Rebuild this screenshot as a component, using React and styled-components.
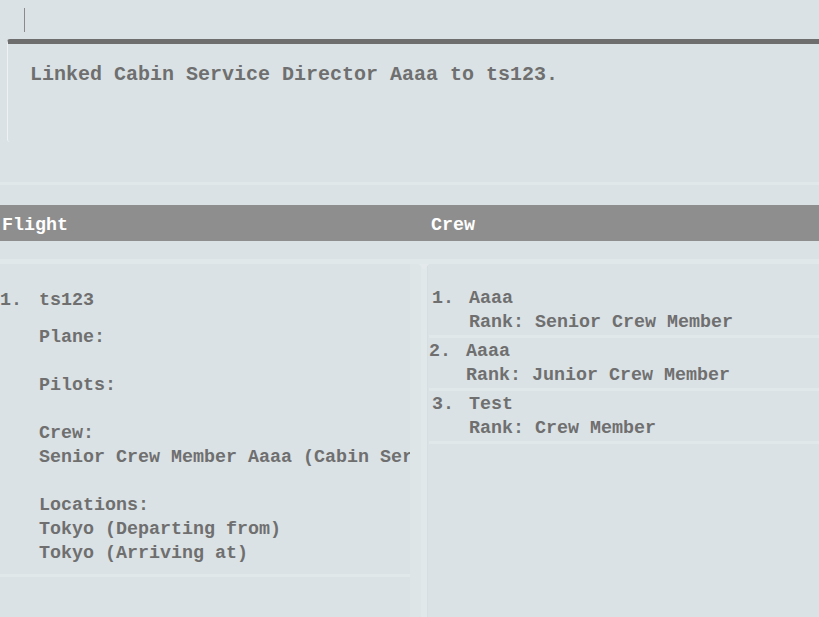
import styled, { createGlobalStyle } from "styled-components";

const BG = "#dae2e5";
const LIGHT = "#e1e8ea";
const TEXT = "#6f6f6f";

const GlobalStyle = createGlobalStyle`
  html, body {
    margin: 0;
    padding: 0;
    background: ${BG};
  }
  body {
    font-family: "Liberation Mono", "Courier New", monospace;
    font-weight: bold;
    color: ${TEXT};
    overflow: hidden;
  }
`;

const crew = [
  { name: "Aaaa", rank: "Senior Crew Member", inset: 3 },
  { name: "Aaaa", rank: "Junior Crew Member", inset: 0 },
  { name: "Test", rank: "Crew Member", inset: 3 },
];

const flightLines = [
  { label: "Plane:", values: [] },
  { label: "Pilots:", values: [] },
  { label: "Crew:", values: ["Senior Crew Member Aaaa (Cabin Service Director)"] },
  {
    label: "Locations:",
    values: ["Tokyo (Departing from)", "Tokyo (Arriving at)"],
  },
];

function App() {
  return (
    <Page>
      <GlobalStyle />
      <CommandBox>
        <Caret />
      </CommandBox>
      <ResultBox>Linked Cabin Service Director Aaaa to ts123.</ResultBox>
      <Divider />

      <HeaderBar>
        <HeaderCell>Flight</HeaderCell>
        <HeaderCell>Crew</HeaderCell>
      </HeaderBar>

      <Band />
      <Panels>
        <LeftPanel>
          <FlightCell>
            <Index $width={39}>1.</Index>
            <div>
              <Line>ts123</Line>
              <Details>
                {flightLines.map((group, i) => (
                  <Group key={group.label} $last={i === flightLines.length - 1}>
                    <Line>{group.label}</Line>
                    {group.values.map((v) => (
                      <Line key={v}>{v}</Line>
                    ))}
                  </Group>
                ))}
              </Details>
            </div>
          </FlightCell>
          <FlightCell $empty />
        </LeftPanel>
        <Track />
        <Splitter>
          <SplitterTip />
        </Splitter>
        <RightPanel>
          {crew.map((c, i) => (
            <CrewCell key={i} $inset={c.inset}>
              <Index $width={37}>{i + 1}.</Index>
              <div>
                <Line>{c.name}</Line>
                <Line>Rank: {c.rank}</Line>
              </div>
            </CrewCell>
          ))}
        </RightPanel>
      </Panels>
    </Page>
  );
}

export default App;

const Page = styled.div`
  width: 819px;
  height: 617px;
  display: flex;
  flex-direction: column;
  overflow: hidden;

  & > * {
    flex-shrink: 0;
  }
`;

const CommandBox = styled.div`
  height: 39px;
  padding: 8px 0 0 24px;
  box-sizing: border-box;
`;

const Caret = styled.div`
  width: 1px;
  height: 24px;
  background: #8a8a8a;
`;

const ResultBox = styled.div`
  margin-left: 7px;
  height: 103px;
  box-sizing: border-box;
  border-top: 5px solid #6e6e6e;
  border-left: 1px solid #eef2f3;
  border-top-left-radius: 3px;
  border-bottom-left-radius: 3px;
  padding: 19px 0 0 22px;
  font-size: 20px;
  line-height: 24px;
  white-space: nowrap;
`;

const Divider = styled.div`
  margin-top: 40px;
  height: 3px;
  background: ${LIGHT};
`;

const HeaderBar = styled.div`
  margin-top: 20px;
  height: 36px;
  box-sizing: border-box;
  padding-top: 4px;
  background: #8e8e8e;
  display: grid;
  grid-template-columns: 429px 1fr;
  align-items: center;
  font-size: 18.33px;
  color: #ffffff;
`;

const HeaderCell = styled.div`
  padding-left: 2px;
`;

const Band = styled.div`
  margin-top: 18px;
  height: 5px;
  background: ${LIGHT};
`;

const Panels = styled.div`
  flex: 1 1 auto !important;
  min-height: 0;
  overflow: hidden;
  display: grid;
  grid-template-columns: 410px 11px 6px 1fr;
  font-size: 18.33px;
  line-height: 24px;
  white-space: nowrap;
`;

const LeftPanel = styled.div`
  padding-top: 22px;
  display: flex;
  flex-direction: column;
  gap: 4px;
  overflow: hidden;
`;

const Track = styled.div`
  background: #dde5e7;
`;

const Splitter = styled.div`
  position: relative;
  background: ${LIGHT};
`;

const SplitterTip = styled.div`
  position: absolute;
  top: 0;
  left: -2px;
  width: 0;
  height: 0;
  border-left: 5px solid transparent;
  border-right: 5px solid transparent;
  border-top: 6px solid #e4eaec;
`;

const RightPanel = styled.div`
  padding: 21px 0 0 1px;
  border-left: 1px solid #d6dee1;
  display: flex;
  flex-direction: column;
`;

const FlightCell = styled.div`
  display: flex;
  flex-shrink: 0;
  background: ${BG};
  border-bottom: 3px solid ${LIGHT};
  padding: 3px 0 8px 0;
  min-height: ${({ $empty }) => ($empty ? "60px" : "auto")};
`;

const CrewCell = styled.div`
  display: flex;
  padding: 2px 0 0 ${({ $inset }) => $inset}px;
  border-bottom: 3px solid ${LIGHT};
`;

const Index = styled.div`
  width: ${({ $width }) => $width}px;
  flex-shrink: 0;
`;

const Details = styled.div`
  margin-top: 13px;
  display: flex;
  flex-direction: column;
`;

const Group = styled.div`
  margin-bottom: ${({ $last }) => ($last ? "0" : "24px")};
`;

const Line = styled.div`
  height: 24px;
`;
